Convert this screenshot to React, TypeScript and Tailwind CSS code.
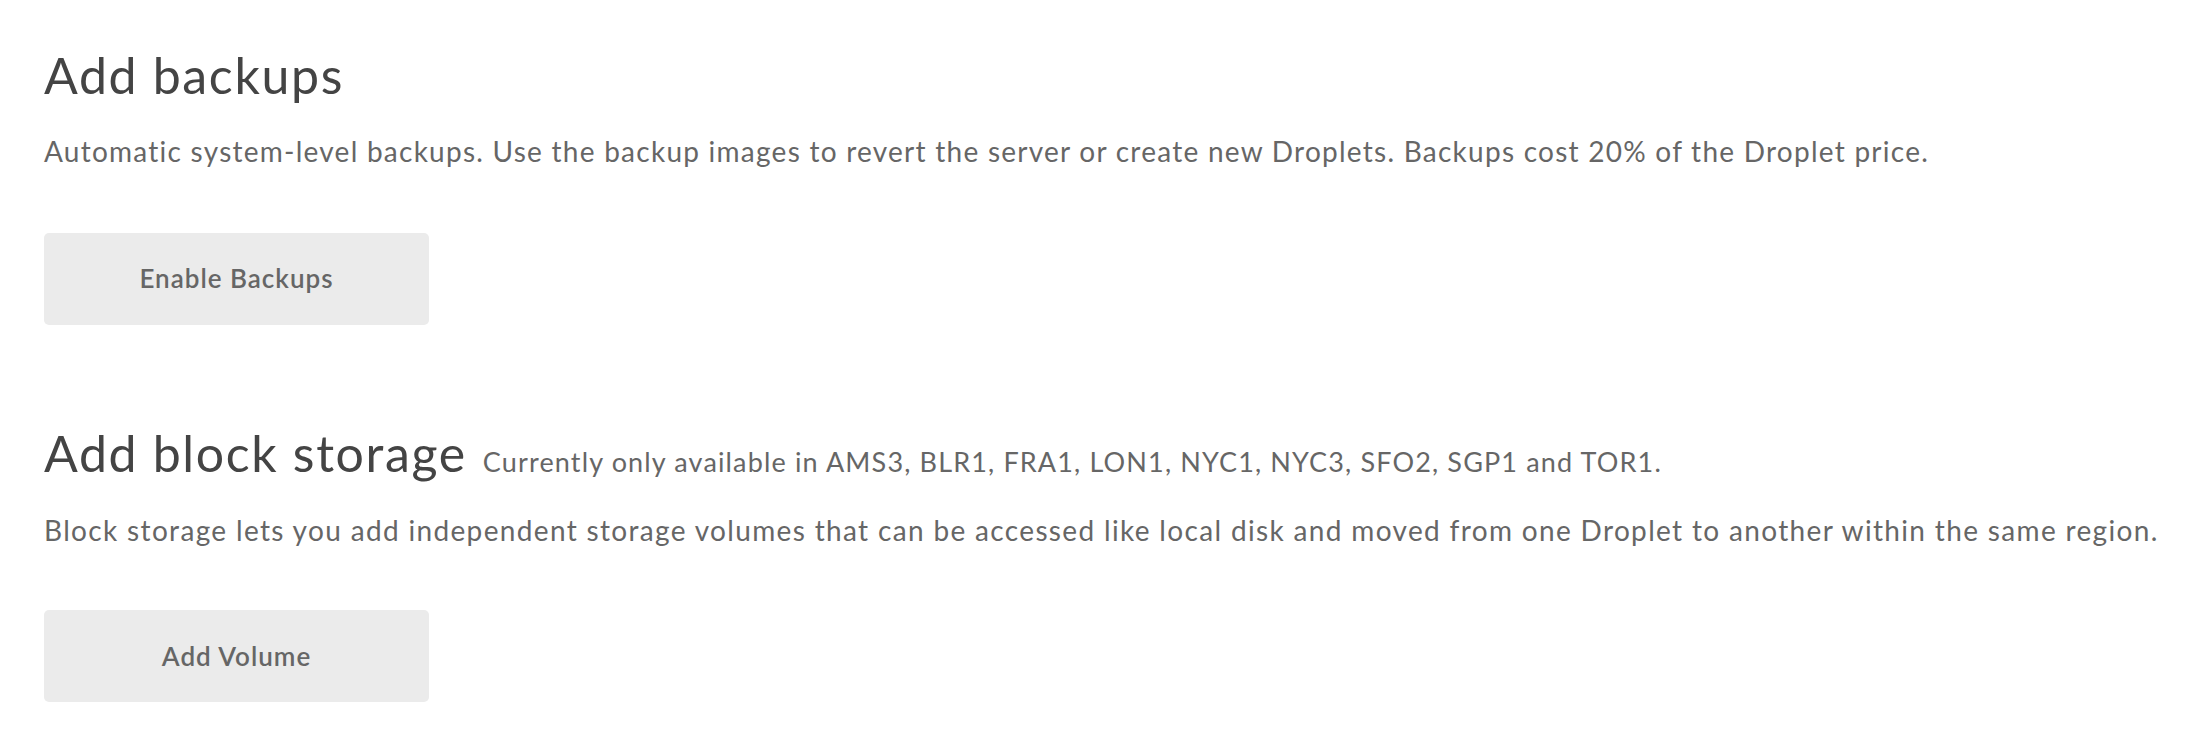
export default function App() {
    return (
        <div className="min-h-screen bg-white pl-[44px] pt-[45px] font-['Lato',sans-serif]">
            <section>
                <h2 className="text-[50px] font-normal leading-[1.2] tracking-[1.65px] text-[#444]">Add backups</h2>
                <p className="mt-[30px] text-[28px] leading-[1.2] tracking-[1.25px] text-[#666]">
                    Automatic system-level backups. Use the backup images to revert the server or create new Droplets. Backups cost 20% of the Droplet price.
                </p>
                <button className="mt-[64px] flex h-[92px] w-[385px] items-center justify-center rounded-[5px] bg-[#ebebeb] text-[26px] font-semibold tracking-[1px] text-[#666]">
                    Enable Backups
                </button>
            </section>
            <section className="mt-[98px]">
                <div className="flex items-baseline gap-[16px]">
                    <h2 className="text-[50px] font-normal leading-[1.2] tracking-[1.65px] text-[#444]">Add block storage</h2>
                    <span className="text-[27px] leading-[1.2] tracking-[1.15px] text-[#666]">
                        Currently only available in AMS3, BLR1, FRA1, LON1, NYC1, NYC3, SFO2, SGP1 and TOR1.
                    </span>
                </div>
                <p className="mt-[31px] text-[28px] leading-[1.2] tracking-[1.34px] text-[#666]">
                    Block storage lets you add independent storage volumes that can be accessed like local disk and moved from one Droplet to another within the same region.
                </p>
                <button className="mt-[63px] flex h-[92px] w-[385px] items-center justify-center rounded-[5px] bg-[#ebebeb] text-[26px] font-semibold tracking-[1px] text-[#666]">
                    Add Volume
                </button>
            </section>
        </div>
    );
}
